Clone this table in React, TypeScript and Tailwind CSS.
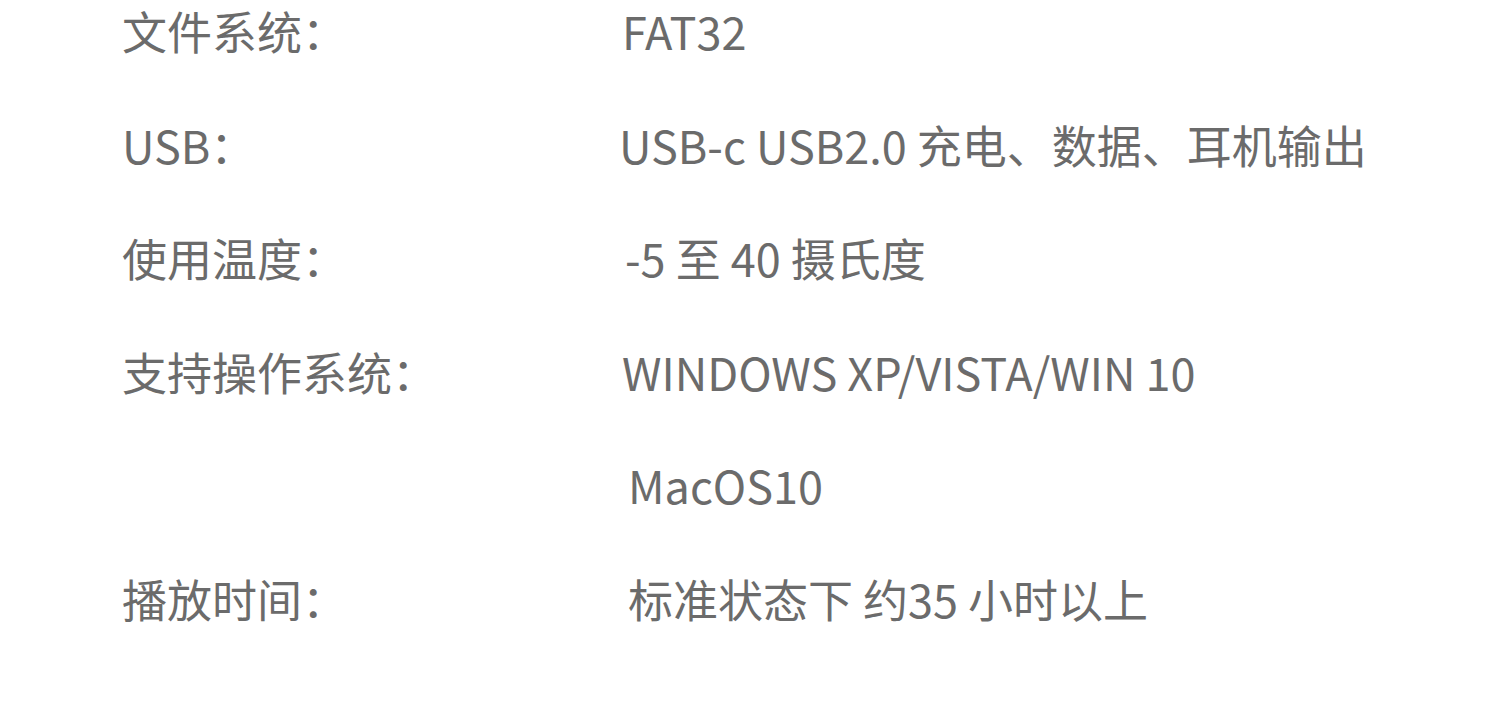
import { Fragment } from "react";

const specs: { label: string; value: string; indent: string }[] = [
  { label: "文件系统：", value: "FAT32", indent: "pl-[3px]" },
  { label: "USB：", value: "USB-c USB2.0 充电、数据、耳机输出", indent: "pl-0" },
  { label: "使用温度：", value: "-5 至 40 摄氏度", indent: "pl-[6px]" },
  { label: "支持操作系统：", value: "WINDOWS XP/VISTA/WIN 10", indent: "pl-[3px]" },
  { label: "", value: "MacOS10", indent: "pl-[9px]" },
  { label: "播放时间：", value: "标准状态下 约35 小时以上", indent: "pl-[9px]" },
];

export default function App() {
  return (
    <div
      className="w-[1500px] h-[707px] overflow-hidden bg-white text-[#6b6b6b] text-[45px]"
      style={{ fontFamily: '"Noto Sans CJK SC", "Noto Sans", sans-serif' }}
    >
      {/* spec table */}
      <div className="grid grid-cols-[497px_1fr] gap-y-[52.5px] pl-[122px] leading-[61px] whitespace-nowrap">
        {specs.map((row, i) => (
          <Fragment key={i}>
            <div>{row.label}</div>
            <div className={row.indent}>{row.value}</div>
          </Fragment>
        ))}
      </div>
    </div>
  );
}
